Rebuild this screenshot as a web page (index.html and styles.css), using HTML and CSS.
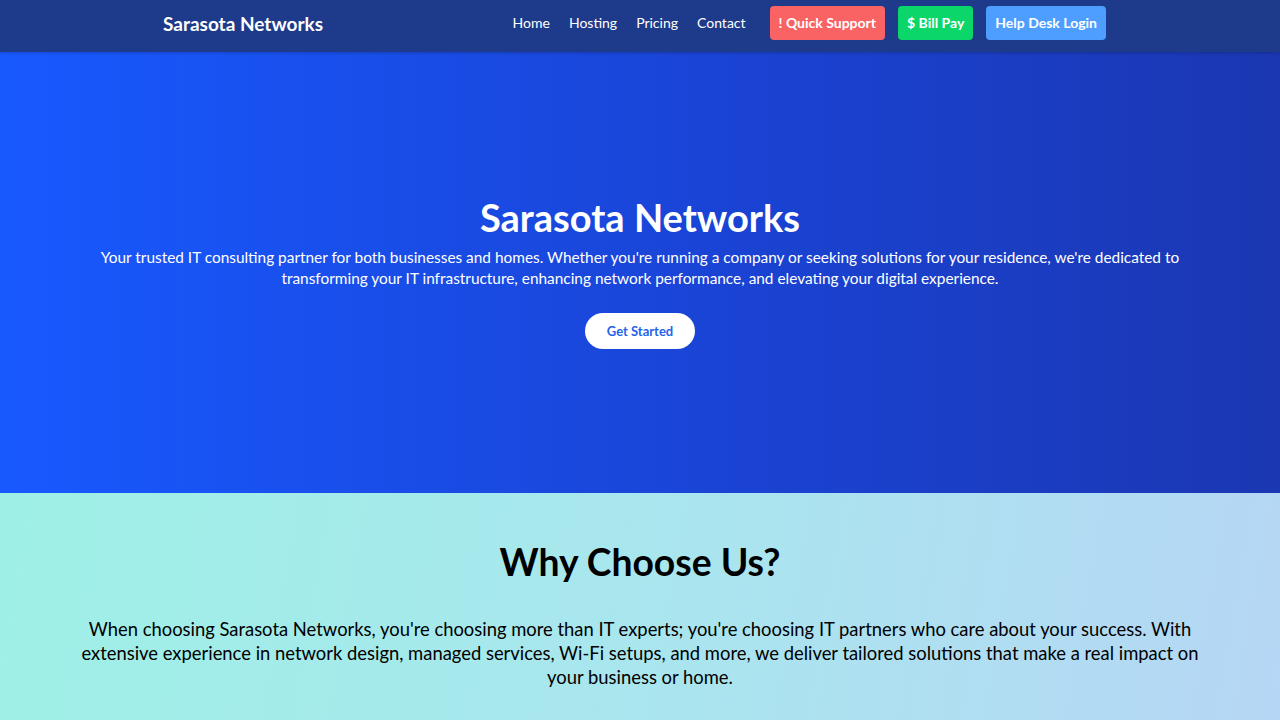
FILE: index.html
```html
<!DOCTYPE html>
<html lang="en">
<head>
<meta charset="utf-8">
<title>Sarasota Networks</title>
<link rel="stylesheet" href="styles.css">
</head>
<body>
<header class="nav">
  <div class="nav-inner">
    <a class="logo" href="#">Sarasota Networks</a>
    <nav class="links">
      <a href="#">Home</a>
      <a href="#">Hosting</a>
      <a href="#">Pricing</a>
      <a href="#">Contact</a>
    </nav>
    <div class="actions">
      <a class="btn btn-red" href="#">! Quick Support</a>
      <a class="btn btn-green" href="#">$ Bill Pay</a>
      <a class="btn btn-blue" href="#">Help Desk Login</a>
    </div>
  </div>
</header>
<section class="hero">
  <h1>Sarasota Networks</h1>
  <p>Your trusted IT consulting partner for both businesses and homes. Whether you're running a company or seeking solutions for your residence, we're dedicated to transforming your IT infrastructure, enhancing network performance, and elevating your digital experience.</p>
  <a class="cta" href="#">Get Started</a>
</section>
<section class="why">
  <h2>Why Choose Us?</h2>
  <p>When choosing Sarasota Networks, you're choosing more than IT experts; you're choosing IT partners who care about your success. With extensive experience in network design, managed services, Wi-Fi setups, and more, we deliver tailored solutions that make a real impact on your business or home.</p>
</section>
</body>
</html>
```
FILE: styles.css
```css
* { box-sizing: border-box; }
html, body { margin: 0; padding: 0; }
body {
  font-family: Lato, "Open Sans", sans-serif;
  color: #000;
}
a { text-decoration: none; }

.nav {
  background: #1e3a8a;
  height: 52px;
  box-shadow: 0 1px 3px rgba(0,0,0,0.2);
  position: relative;
  z-index: 1;
}
.nav-inner {
  height: 52px;
  display: flex;
  align-items: center;
  padding: 0 174px 6px 163px;
}
.logo {
  color: #fff;
  font-weight: 700;
  font-size: 19px;
}
.links {
  margin-left: auto;
  display: flex;
  gap: 19px;
}
.links a {
  color: #fff;
  font-size: 14px;
  line-height: 18px;
  padding-bottom: 1px;
}
.actions {
  display: flex;
  gap: 13px;
  margin-left: 24px;
}
.btn {
  color: #fff;
  font-weight: 700;
  font-size: 14px;
  height: 34px;
  line-height: 34px;
  padding: 0 9px;
  border-radius: 4px;
}
.btn-red { background: #f96363; }
.btn-green { background: #0bd66a; }
.btn-blue { background: #4d9eff; }

.hero {
  height: 441px;
  background: linear-gradient(90deg, #1859ff 0%, #1a44d6 55%, #1b37b2 100%);
  color: #fff;
  text-align: center;
  display: flex;
  flex-direction: column;
  align-items: center;
  justify-content: center;
  padding: 0 80px;
}
.hero h1 {
  margin: 0 0 10px;
  font-size: 38px;
  line-height: 40px;
  font-weight: 700;
}
.hero p {
  margin: 0;
  font-size: 15.4px;
  line-height: 21px;
}
.cta {
  margin-top: 24px;
  background: #fff;
  color: #2563eb;
  font-weight: 700;
  font-size: 13px;
  width: 110px;
  height: 36px;
  line-height: 36px;
  border-radius: 18px;
}

.why {
  background: linear-gradient(100deg, #9ef0e6 0%, #a9e6ee 50%, #b6d6f5 100%);
  text-align: center;
  padding: 43px 80px 60px;
  min-height: 300px;
}
.why h2 {
  margin: 0 0 29px;
  font-size: 37.3px;
  line-height: 52px;
  font-weight: 700;
}
.why p {
  margin: 0;
  font-size: 18.4px;
  line-height: 24px;
}
```
